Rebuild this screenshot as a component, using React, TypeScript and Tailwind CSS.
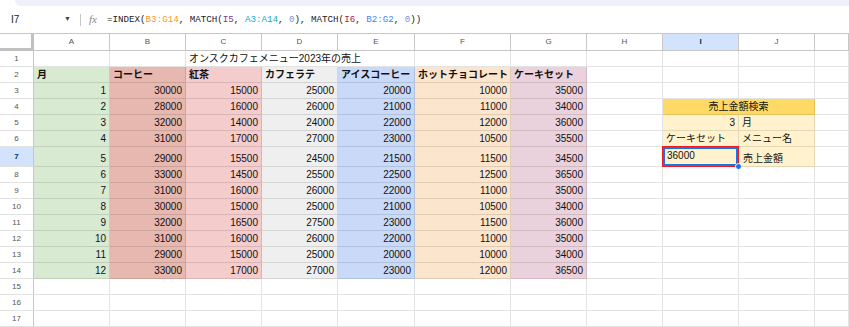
import React from "react"

const cols = "grid grid-cols-[34px_76px_76px_76px_76px_77px_96px_76px_76px_76px_76px_1fr]"
const font = "font-['Liberation_Sans','Noto_Sans_CJK_JP',sans-serif]"

const colBg = [
  "bg-[#d9ead3]",
  "bg-[#e6b8af]",
  "bg-[#f4cccc]",
  "bg-[#efefef]",
  "bg-[#c9daf8]",
  "bg-[#fce5cd]",
  "bg-[#ead1dc]",
]

const headers = ["月", "コーヒー", "紅茶", "カフェラテ", "アイスコーヒー", "ホットチョコレート", "ケーキセット"]

const data = [
  [1, 30000, 15000, 25000, 20000, 10000, 35000],
  [2, 28000, 16000, 26000, 21000, 11000, 34000],
  [3, 32000, 14000, 24000, 22000, 12000, 36000],
  [4, 31000, 17000, 27000, 23000, 10500, 35500],
  [5, 29000, 15500, 24500, 21500, 11500, 34500],
  [6, 33000, 14500, 25500, 22500, 12500, 36500],
  [7, 31000, 16000, 26000, 22000, 11000, 35000],
  [8, 30000, 15000, 25000, 21000, 10500, 34000],
  [9, 32000, 16500, 27500, 23000, 11500, 36000],
  [10, 31000, 16000, 26000, 22000, 11000, 35000],
  [11, 29000, 15000, 25000, 20000, 10000, 34000],
  [12, 33000, 17000, 27000, 23000, 12000, 36500],
]

function Cell({
  children,
  className = "",
}: {
  children?: React.ReactNode
  className?: string
}) {
  return (
    <div
      className={`flex items-end overflow-hidden whitespace-nowrap border-r border-b border-[#0000001c] px-[3px] pb-[1px] text-[10px] leading-[12px] text-[#111] ${className}`}
    >
      {children}
    </div>
  )
}

function RowHead({ n, active = false }: { n: number; active?: boolean }) {
  return (
    <div
      className={`flex items-center justify-center border-r border-b border-r-[#c7c7c7] border-b-[#e2e2e2] text-[8px] ${
        active ? "bg-[#d3e3fd] font-bold text-[#0b2e6b]" : "text-[#555]"
      }`}
    >
      {n}
    </div>
  )
}

// empty cells for the unused columns
function Blanks({ count }: { count: number }) {
  return (
    <>
      {Array.from({ length: count }).map((_, i) => (
        <Cell key={i} />
      ))}
    </>
  )
}

export default function App() {
  const letters = ["A", "B", "C", "D", "E", "F", "G", "H", "I", "J", ""]

  return (
    <div className={`h-[327px] w-[849px] overflow-hidden bg-white ${font}`}>
      {/* Toolbar edge + formula bar */}
      <div className="h-[33px]">
        <div className="ml-[15px] h-[6px] rounded-bl-[10px] bg-[#edf2fa]" />
        <div className="flex h-[27px] items-center">
          <div className="w-[62px] pl-[11px] text-[10px] text-[#222]">I7</div>
          <div className="w-[18px] pl-[2px] text-[7px] text-[#444]">▼</div>
          <div className="mr-[8px] h-[12px] w-px bg-[#c4c7c5]" />
          <div className="mr-[8px] w-[10px] font-['Liberation_Serif',serif] text-[11px] italic text-[#8a8a8a]">fx</div>
          <div className="font-['Liberation_Mono',monospace] text-[9.2px] text-[#222]">
            =INDEX(<span className="text-[#f7981d]">B3:G14</span>, MATCH(
            <span className="text-[#7e3794]">I5</span>, <span className="text-[#11a9cc]">A3:A14</span>,{" "}
            <span className="text-[#8b8bd6]">0</span>), MATCH(<span className="text-[#a61d4c]">I6</span>,{" "}
            <span className="text-[#4285f4]">B2:G2</span>, <span className="text-[#8b8bd6]">0</span>))
          </div>
        </div>
      </div>

      {/* Column headers */}
      <div className={`${cols} h-[18px] border-t border-[#c7c7c7]`}>
        <div className="border-r-[3px] border-b-[3px] border-[#c0c0c0]" />
        {letters.map((l, i) => (
          <div
            key={i}
            className={`flex items-center justify-center border-r border-b border-[#c7c7c7] text-[8px] ${
              l === "I" ? "bg-[#d3e3fd] font-bold text-[#0b2e6b]" : "text-[#555]"
            }`}
          >
            {l}
          </div>
        ))}
      </div>

      {/* Row 1 */}
      <div className={`${cols} h-[16px]`}>
        <RowHead n={1} />
        <Cell />
        <Cell />
        <Cell className="col-span-3 overflow-visible">オンスクカフェメニュー2023年の売上</Cell>
        <Blanks count={6} />
      </div>

      {/* Row 2 */}
      <div className={`${cols} h-[16px]`}>
        <RowHead n={2} />
        {headers.map((h, i) => (
          <Cell key={i} className={`font-bold ${colBg[i]}`}>
            {h}
          </Cell>
        ))}
        <Blanks count={4} />
      </div>

      {/* Rows 3-14 */}
      {data.map((row, r) => {
        const n = r + 3
        const tall = n === 7
        return (
          <div key={n} className={`${cols} ${tall ? "h-[20px]" : "h-[16px]"}`}>
            <RowHead n={n} active={tall} />
            {row.map((v, i) => (
              <Cell key={i} className={`justify-end ${colBg[i]}`}>
                {v}
              </Cell>
            ))}
            <Cell />
            {n === 4 && (
              <>
                <Cell className="col-span-2 justify-center bg-[#ffd966]">売上金額検索</Cell>
                <Cell />
              </>
            )}
            {n === 5 && (
              <>
                <Cell className="justify-end bg-[#fff2cc]">3</Cell>
                <Cell className="bg-[#fff2cc]">月</Cell>
                <Cell />
              </>
            )}
            {n === 6 && (
              <>
                <Cell className="bg-[#fff2cc]">ケーキセット</Cell>
                <Cell className="bg-[#fff2cc]">メニュー名</Cell>
                <Cell />
              </>
            )}
            {n === 7 && (
              <>
                <div className="relative flex items-end border-r border-b border-[#0000001c] bg-[#fff2cc] px-[4px] pb-[4px] text-[10px] leading-[12px] text-[#111]">
                  36000
                  <div className="absolute -top-px -left-px -right-px -bottom-px border border-[#f21c1c]">
                    <div className="h-full w-full border-2 border-[#1a73e8]" />
                  </div>
                  <div className="absolute -right-[4px] -bottom-[4px] z-10 h-[7px] w-[7px] rounded-full border border-white bg-[#1a73e8]" />
                </div>
                <Cell className="bg-[#fff2cc] pl-[4px]">売上金額</Cell>
                <Cell />
              </>
            )}
            {n !== 4 && n !== 5 && n !== 6 && n !== 7 && <Blanks count={3} />}
          </div>
        )
      })}

      {/* Rows 15-17 */}
      {[15, 16, 17].map((n) => (
        <div key={n} className={`${cols} h-[16px]`}>
          <RowHead n={n} />
          <Blanks count={11} />
        </div>
      ))}
    </div>
  )
}
